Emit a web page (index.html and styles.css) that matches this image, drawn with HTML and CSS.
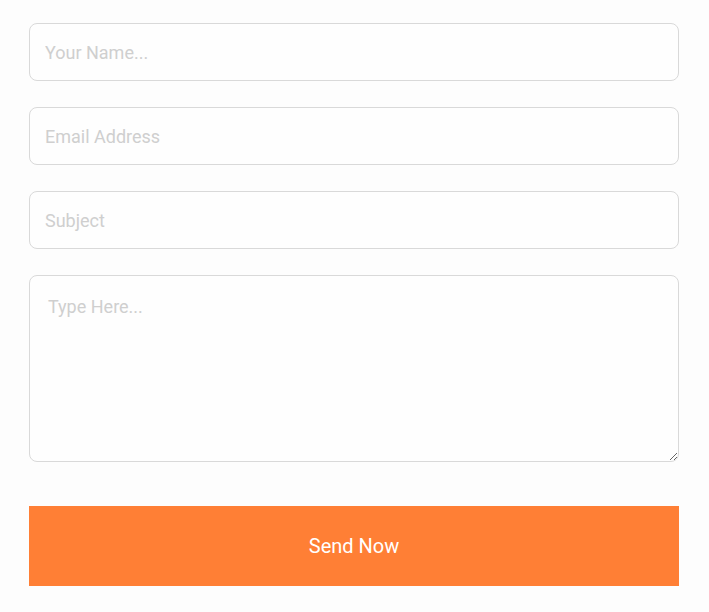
FILE: index.html
```html
<!DOCTYPE html>
<html>
<head>
<meta charset="utf-8">
<link rel="stylesheet" href="styles.css">
</head>
<body>
<form class="form">
  <input class="field" type="text" placeholder="Your Name...">
  <input class="field" type="email" placeholder="Email Address">
  <input class="field" type="text" placeholder="Subject">
  <textarea class="message" placeholder="Type Here..."></textarea>
  <button class="send" type="button">Send Now</button>
</form>
</body>
</html>
```
FILE: styles.css
```css
html, body {
  margin: 0;
  padding: 0;
  background: #fdfdfd;
}
.form {
  display: flex;
  flex-direction: column;
  width: 650px;
  margin: 23px 0 0 29px;
}
.field, .message {
  box-sizing: border-box;
  width: 650px;
  border: 1px solid #d9d9d9;
  border-radius: 8px;
  background: #fefefe;
  font-family: Roboto, "Liberation Sans", sans-serif;
  font-size: 18px;
  color: #333;
  outline: none;
}
.field {
  height: 58px;
  padding: 0 15px;
  margin-bottom: 26px;
}
.message {
  height: 187px;
  padding: 20px 18px;
  resize: vertical;
  margin-bottom: 44px;
}
.field::placeholder, .message::placeholder {
  color: #cfcfcf;
}
.send {
  height: 80px;
  width: 650px;
  border: none;
  background: #ff7f35;
  color: #fff;
  font-family: Roboto, "Liberation Sans", sans-serif;
  font-size: 20px;
  cursor: pointer;
}
```
